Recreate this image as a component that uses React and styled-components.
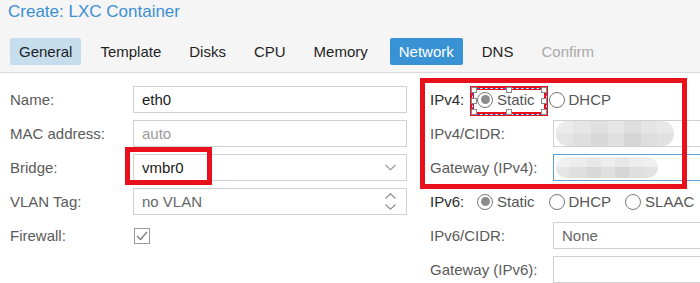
import React from 'react';
import styled, { createGlobalStyle } from 'styled-components';

const GlobalStyle = createGlobalStyle`
  html, body {
    margin: 0;
    padding: 0;
    background: #ffffff;
  }
  body {
    font-family: "Liberation Sans", Arial, sans-serif;
  }
`;

const tabs = [
  { name: 'General', state: 'visited' },
  { name: 'Template' },
  { name: 'Disks' },
  { name: 'CPU' },
  { name: 'Memory' },
  { name: 'Network', state: 'active' },
  { name: 'DNS' },
  { name: 'Confirm', state: 'disabled' },
];

const ChevronDown = () => (
  <svg width="11" height="7" viewBox="0 0 11 7">
    <path d="M0.5 0.8 L5.5 5.8 L10.5 0.8" fill="none" stroke="#8a8a8a" strokeWidth="1.1" />
  </svg>
);

const Spinner = () => (
  <svg width="11" height="17" viewBox="0 0 11 17">
    <path d="M0.5 5.5 L5.5 0.8 L10.5 5.5" fill="none" stroke="#8a8a8a" strokeWidth="1.1" />
    <path d="M0.5 11.5 L5.5 16.2 L10.5 11.5" fill="none" stroke="#8a8a8a" strokeWidth="1.1" />
  </svg>
);

const Check = () => (
  <svg width="12" height="10" viewBox="0 0 12 10">
    <path d="M1 5 L4.5 8.5 L11 1" fill="none" stroke="#777" strokeWidth="1.2" />
  </svg>
);

const RadioGroup = ({ options, selected }) => (
  <Radios>
    {options.map((opt) => (
      <RadioItem key={opt}>
        <RadioCircle $on={opt === selected} />
        {opt}
      </RadioItem>
    ))}
  </Radios>
);

const App = () => {
  return (
    <Window>
      <GlobalStyle />
      <Header>
        <Title>Create: LXC Container</Title>
        <TabBar>
          {tabs.map((t) => (
            <Tab key={t.name} $state={t.state}>
              {t.name}
            </Tab>
          ))}
        </TabBar>
      </Header>

      <Form>
        <Column $width="397px">
          <Row>
            <Label>Name:</Label>
            <Field>eth0</Field>
          </Row>
          <Row>
            <Label>MAC address:</Label>
            <Field $muted>auto</Field>
          </Row>
          <Row>
            <Label>Bridge:</Label>
            <Field>
              vmbr0
              <Trigger>
                <ChevronDown />
              </Trigger>
            </Field>
          </Row>
          <Row>
            <Label>VLAN Tag:</Label>
            <Field $grey>
              no VLAN
              <Trigger>
                <Spinner />
              </Trigger>
            </Field>
          </Row>
          <Row>
            <Label>Firewall:</Label>
            <CheckBox>
              <Check />
            </CheckBox>
          </Row>
        </Column>

        <Column $width="400px">
          <Row $labelWidth="47px">
            <Label $dark>IPv4:</Label>
            <RadioGroup options={['Static', 'DHCP']} selected="Static" />
          </Row>
          <Row>
            <Label>IPv4/CIDR:</Label>
            <Field>
              <Redacted $width="118px" />
            </Field>
          </Row>
          <Row>
            <Label>Gateway (IPv4):</Label>
            <Field $focused>
              <Redacted $width="102px" $short />
            </Field>
          </Row>
          <Row $labelWidth="47px">
            <Label $dark>IPv6:</Label>
            <RadioGroup options={['Static', 'DHCP', 'SLAAC']} selected="Static" />
          </Row>
          <Row>
            <Label>IPv6/CIDR:</Label>
            <Field $grey>None</Field>
          </Row>
          <Row>
            <Label>Gateway (IPv6):</Label>
            <Field />
          </Row>
        </Column>
      </Form>

      <Highlight style={{ left: 125, top: 147, width: 87, height: 38 }} />
      <Highlight style={{ left: 420, top: 78, width: 267, height: 111 }} />
      <Selection>
        <Handle $x="0%" $y="0%" />
        <Handle $x="50%" $y="0%" />
        <Handle $x="100%" $y="0%" />
        <Handle $x="0%" $y="50%" />
        <Handle $x="100%" $y="50%" />
        <Handle $x="0%" $y="100%" />
        <Handle $x="50%" $y="100%" />
        <Handle $x="100%" $y="100%" />
      </Selection>
    </Window>
  );
};
export default App;

const Window = styled.div`
  position: relative;
  width: 700px;
  height: 283px;
  overflow: hidden;
  background: #ffffff;
  font-family: "Liberation Sans", Arial, sans-serif;
`;

const Header = styled.div`
  background: #f5f5f5;
  border-bottom: 1px solid #dadada;
  padding: 0 0 7px 0;
`;

const Title = styled.div`
  color: #3b8fd3;
  font-size: 17px;
  line-height: 24px;
  padding-left: 8px;
`;

const TabBar = styled.div`
  display: flex;
  gap: 10px;
  padding-left: 10px;
  margin-top: 14px;
`;

const Tab = styled.div`
  height: 27px;
  line-height: 27px;
  padding: 0 9px;
  font-size: 15px;
  border-radius: 2px;
  color: ${(p) =>
    p.$state === 'active' ? '#ffffff' : p.$state === 'disabled' ? '#a9a9a9' : '#1f1f1f'};
  background: ${(p) =>
    p.$state === 'active' ? '#3892d4' : p.$state === 'visited' ? '#c6ddee' : 'transparent'};
  margin-left: ${(p) => (p.$state === 'active' ? '3px' : '0')};
`;

const Form = styled.div`
  display: flex;
  gap: 23px;
  padding: 13px 0 0 10px;
`;

const Column = styled.div`
  flex: none;
  width: ${(p) => p.$width};
  display: flex;
  flex-direction: column;
  gap: 7px;
`;

const Row = styled.div`
  display: grid;
  grid-template-columns: ${(p) => p.$labelWidth || '123px'} 1fr;
  align-items: center;
  height: 27px;
`;

const Label = styled.div`
  font-size: 15px;
  color: ${(p) => (p.$dark ? '#2b2b2b' : '#5a5a5a')};
  white-space: nowrap;
`;

const Field = styled.div`
  position: relative;
  box-sizing: border-box;
  height: 27px;
  border: 1px solid ${(p) => (p.$focused ? '#5aa0dc' : '#d0d0d0')};
  background: #ffffff;
  padding: 0 8px;
  display: flex;
  align-items: center;
  font-size: 15px;
  color: ${(p) => (p.$muted ? '#9a9a9a' : p.$grey ? '#666666' : '#1a1a1a')};
`;

const Trigger = styled.div`
  margin-left: auto;
  margin-right: 2px;
  display: flex;
  align-items: center;
`;

const CheckBox = styled.div`
  box-sizing: border-box;
  width: 16px;
  height: 16px;
  margin-left: 1px;
  border: 1px solid #9a9a9a;
  display: flex;
  align-items: center;
  justify-content: center;
`;

const Radios = styled.div`
  display: flex;
  align-items: center;
  gap: 14px;
`;

const RadioItem = styled.div`
  display: flex;
  align-items: center;
  gap: 4px;
  font-size: 15px;
  color: #555555;
`;

const RadioCircle = styled.span`
  box-sizing: border-box;
  width: 16px;
  height: 16px;
  border-radius: 50%;
  border: 1px solid #7a7a7a;
  display: flex;
  align-items: center;
  justify-content: center;
  &::after {
    content: '';
    display: ${(p) => (p.$on ? 'block' : 'none')};
    width: 9px;
    height: 9px;
    border-radius: 50%;
    background: #8c8c8c;
  }
`;

const Redacted = styled.div`
  margin-left: -6px;
  width: ${(p) => p.$width};
  height: ${(p) => (p.$short ? '21px' : '25px')};
  border-radius: 12px;
  background:
    linear-gradient(
      to bottom,
      rgba(255, 255, 255, ${(p) => (p.$short ? 0.35 : 0.1)}) 0 50%,
      rgba(0, 0, 0, 0.02) 50% 100%
    ),
    linear-gradient(
      to right,
      #e9e9e9 0 14%,
      #e3e3e3 14% 30%,
      #dcdcdc 30% 44%,
      #e4e4e4 44% 58%,
      #dadada 58% 72%,
      #e2e2e2 72% 86%,
      #e6e6e6 86% 100%
    );
`;

const Highlight = styled.div`
  position: absolute;
  box-sizing: border-box;
  border: 5px solid #e8111b;
  pointer-events: none;
`;

const Selection = styled.div`
  position: absolute;
  left: 470px;
  top: 86px;
  width: 78px;
  height: 30px;
  box-sizing: border-box;
  border: 4px solid #e8111b;
  &::before,
  &::after {
    content: '';
    position: absolute;
    inset: -2.5px;
  }
  &::before {
    border: 1px solid #ffffff;
  }
  &::after {
    border: 1px dashed #2f56c8;
  }
`;

const Handle = styled.span`
  position: absolute;
  left: ${(p) => p.$x};
  top: ${(p) => p.$y};
  width: 4px;
  height: 4px;
  margin: -3px 0 0 -3px;
  background: #ffffff;
  border: 1px solid #8a8a8a;
  z-index: 1;
`;
